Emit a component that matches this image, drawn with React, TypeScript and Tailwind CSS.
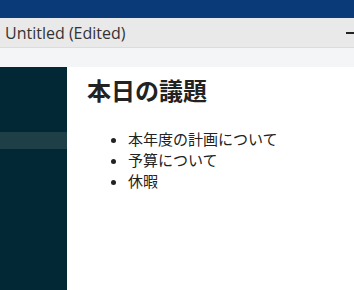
export default function App() {
  const items = ["本年度の計画について", "予算について", "休暇"];

  return (
    <div
      className="flex h-[290px] w-[354px] flex-col overflow-hidden bg-white"
      style={{ fontFamily: '"Open Sans", "Noto Sans CJK JP", sans-serif' }}
    >
      <div className="h-[18px] shrink-0 bg-[#0b3a78]" />
      <div className="flex h-[30px] shrink-0 items-center justify-between border-b border-[#dcdcdc] bg-[#e9e9e9] pl-[5px]">
        <span className="text-[16px] text-[#333333]">Untitled (Edited)</span>
        <span className="mr-[-2px] h-[2px] w-[10px] bg-[#222222]" />
      </div>
      <div className="h-[19px] shrink-0 bg-[#f4f5f6]" />
      <div className="flex min-h-0 flex-1">
        <div className="flex w-[67px] shrink-0 flex-col bg-[#022835] pt-[65px]">
          <div className="h-[17px] bg-[#1e3f46]" />
        </div>
        <div className="flex-1 pl-[20px] pt-[8px]">
          <h1 className="text-[24px] leading-[32px] font-bold text-[#222222]">本日の議題</h1>
          <ul className="mt-[22px] list-disc pl-[41px] text-[15px] leading-[21px] text-[#222222]">
            {items.map((item) => (
              <li key={item}>{item}</li>
            ))}
          </ul>
        </div>
      </div>
    </div>
  );
}
